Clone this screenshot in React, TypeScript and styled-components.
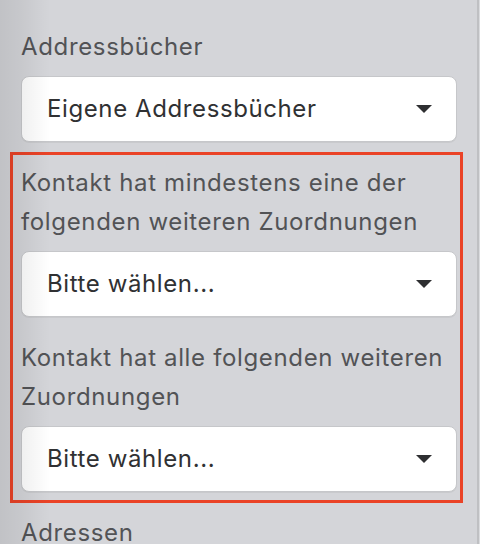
import React from "react";
import styled, { createGlobalStyle } from "styled-components";

const GlobalStyle = createGlobalStyle`
  html, body {
    margin: 0;
    padding: 0;
    background: #d4d5d9;
    font-family: Inter, "Noto Sans", "Liberation Sans", sans-serif;
    overflow: hidden;
  }
  * { box-sizing: border-box; }
`;

const Page = styled.div`
  position: relative;
  display: flex;
  width: 480px;
  height: 544px;
  overflow: hidden;
  background: #d4d5d9;
`;

const Panel = styled.div`
  flex: 1;
  padding: 27px 20px 0 21px;
  border-right: 2px solid #bfc0c3;
`;

const EdgeStrip = styled.div`
  width: 1px;
  background: #dadbde;
`;

const Shade = styled.div`
  position: absolute;
  left: 0;
  top: 0;
  bottom: 0;
  width: 50px;
  pointer-events: none;
  background: linear-gradient(
    to right,
    rgba(0, 0, 0, 0.09) 0,
    rgba(0, 0, 0, 0.06) 22px,
    rgba(0, 0, 0, 0) 50px
  );
`;

const Group = styled.div<{ $last?: boolean }>`
  display: flex;
  flex-direction: column;
  gap: 9px;
  margin-bottom: ${(p) => (p.$last ? "0" : "21px")};
`;

const Label = styled.label`
  font-size: 24px;
  line-height: 39.5px;
  letter-spacing: 0.65px;
  color: #525356;
  white-space: nowrap;
`;

const LabelWrap = styled(Label)`
  white-space: normal;
`;

const Highlight = styled.div`
  margin: -11px -6px 10px -11px;
  padding: 8px 3px 8px 8px;
  border: 3px solid #ea4327;
`;

const Select = styled.div`
  display: flex;
  align-items: center;
  justify-content: space-between;
  height: 66px;
  padding: 0 24px 0 25px;
  background: #ffffff;
  border: 1px solid #c6c7ca;
  border-radius: 8px;
  box-shadow: 0 1px 0 rgba(0, 0, 0, 0.05);
  font-size: 24px;
  letter-spacing: 0.6px;
  color: #303133;
`;

const Caret = styled.span`
  width: 0;
  height: 0;
  border-left: 8px solid transparent;
  border-right: 8px solid transparent;
  border-top: 8px solid #2e2f31;
  margin-top: 1px;
`;

type FieldProps = { label: string; value: string; last?: boolean };

const Field = ({ label, value, last }: FieldProps) => (
  <Group $last={last}>
    <LabelWrap>{label}</LabelWrap>
    <Select>
      <span>{value}</span>
      <Caret />
    </Select>
  </Group>
);

export default function App() {
  return (
    <Page>
      <GlobalStyle />
      <Panel>
        <Field label="Addressbücher" value="Eigene Addressbücher" />
        <Highlight>
          <Field
            label="Kontakt hat mindestens eine der folgenden weiteren Zuordnungen"
            value="Bitte wählen..."
          />
          <Field
            label="Kontakt hat alle folgenden weiteren Zuordnungen"
            value="Bitte wählen..."
            last
          />
        </Highlight>
        <Label>Adressen</Label>
      </Panel>
      <EdgeStrip />
      <Shade />
    </Page>
  );
}
